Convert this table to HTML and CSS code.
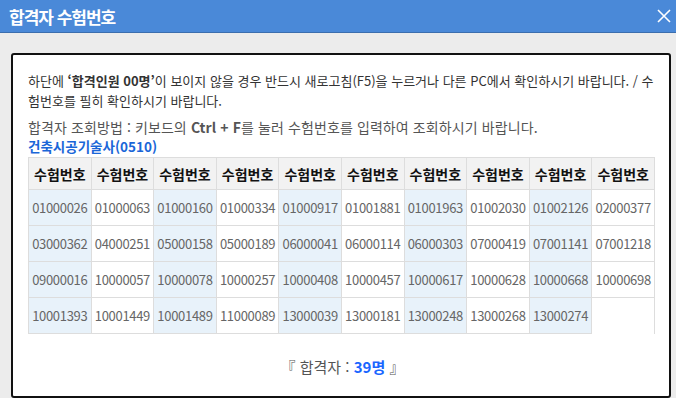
FILE: index.html
```html
<!DOCTYPE html>
<html lang="ko">

<head>
    <meta charset="UTF-8">
    <meta name="viewport" content="width=device-width, initial-scale=1.0">
    <title>합격자 수험번호</title>
    <link rel="stylesheet" href="styles.css">
</head>

<body>

    <header class="popup-head">
        <h1>합격자 수험번호</h1>
        <button class="close-btn" type="button" aria-label="닫기">
            <svg width="14" height="14" viewBox="0 0 14 14">
                <path d="M1 1 L13 13 M13 1 L1 13" stroke="#fff" stroke-width="1.6" fill="none" />
            </svg>
        </button>
    </header>

    <div class="popup-body">
        <div class="result-box">
            <p class="notice">하단에 <b>‘합격인원 00명’</b>이 보이지 않을 경우 반드시 새로고침(F5)을 누르거나 다른 PC에서 확인하시기 바랍니다. / 수험번호를 필히 확인하시기 바랍니다.</p>
            <p class="howto">합격자 조회방법 : 키보드의 <b>Ctrl + F</b>를 눌러 수험번호를 입력하여 조회하시기 바랍니다.</p>
            <h2 class="exam-name">건축시공기술사(0510)</h2>

            <table class="pass-table">
                <tr>
                    <th>수험번호</th><th>수험번호</th><th>수험번호</th><th>수험번호</th><th>수험번호</th>
                    <th>수험번호</th><th>수험번호</th><th>수험번호</th><th>수험번호</th><th>수험번호</th>
                </tr>
                <tr>
                    <td>01000026</td><td>01000063</td><td>01000160</td><td>01000334</td><td>01000917</td>
                    <td>01001881</td><td>01001963</td><td>01002030</td><td>01002126</td><td>02000377</td>
                </tr>
                <tr>
                    <td>03000362</td><td>04000251</td><td>05000158</td><td>05000189</td><td>06000041</td>
                    <td>06000114</td><td>06000303</td><td>07000419</td><td>07001141</td><td>07001218</td>
                </tr>
                <tr>
                    <td>09000016</td><td>10000057</td><td>10000078</td><td>10000257</td><td>10000408</td>
                    <td>10000457</td><td>10000617</td><td>10000628</td><td>10000668</td><td>10000698</td>
                </tr>
                <tr>
                    <td>10001393</td><td>10001449</td><td>10001489</td><td>11000089</td><td>13000039</td>
                    <td>13000181</td><td>13000248</td><td>13000268</td><td>13000274</td>
                </tr>
            </table>

            <p class="total">『 합격자 : <span class="count">39명</span> 』</p>
        </div>
    </div>

</body>

</html>
```

FILE: styles.css
```css
body {
    margin: 0;
    padding: 0;
    font-family: "Noto Sans CJK KR", "Noto Sans", sans-serif;
    background-color: #ececec;
    color: #333;
}

/* blue title bar */
.popup-head {
    display: flex;
    align-items: center;
    justify-content: space-between;
    height: 32px;
    padding: 0 5px 0 9px;
    background-color: #4a89d8;
    border-bottom: 1px solid #3b6eae;
}

.popup-head h1 {
    margin: 0;
    font-size: 17px;
    font-weight: bold;
    color: #fff;
    letter-spacing: -1px;
}

.close-btn {
    display: flex;
    padding: 0;
    border: none;
    background: none;
    cursor: pointer;
}

.popup-body {
    padding: 20px 5px 5px 11px;
}

.result-box {
    background-color: #fff;
    border: 2px solid #111;
    border-radius: 3px;
    padding: 16px 12px 19px 15px;
}

.notice {
    margin: 0;
    font-size: 13px;
    line-height: 20px;
    color: #333;
}

.notice b,
.howto b {
    font-weight: bold;
}

.howto {
    margin: 6px 0 0;
    font-size: 14px;
    line-height: 20px;
    color: #555;
    letter-spacing: 0.1px;
}

.exam-name {
    margin: 0;
    font-size: 13.5px;
    line-height: 18px;
    font-weight: bold;
    color: #1a66d8;
}

.pass-table {
    width: 627px;
    margin-top: 2px;
    border-collapse: collapse;
    border-right: 1px solid #ddd;
    table-layout: fixed;
}

.pass-table th,
.pass-table td {
    border: 1px solid #ddd;
    padding: 0;
    text-align: center;
    white-space: nowrap;
}

.pass-table th {
    height: 31px;
    background-color: #f2f2f2;
    font-size: 14px;
    font-weight: bold;
    color: #111;
}

.pass-table td {
    height: 35px;
    font-size: 13px;
    color: #666;
    background-color: #fff;
    letter-spacing: -0.3px;
}

/* odd columns are tinted */
.pass-table td:nth-child(odd) {
    background-color: #e8f2fa;
}

.total {
    margin: 22px 0 0;
    text-align: center;
    font-size: 15px;
    color: #555;
}

.count {
    font-weight: bold;
    color: #1a66ff;
}
```
